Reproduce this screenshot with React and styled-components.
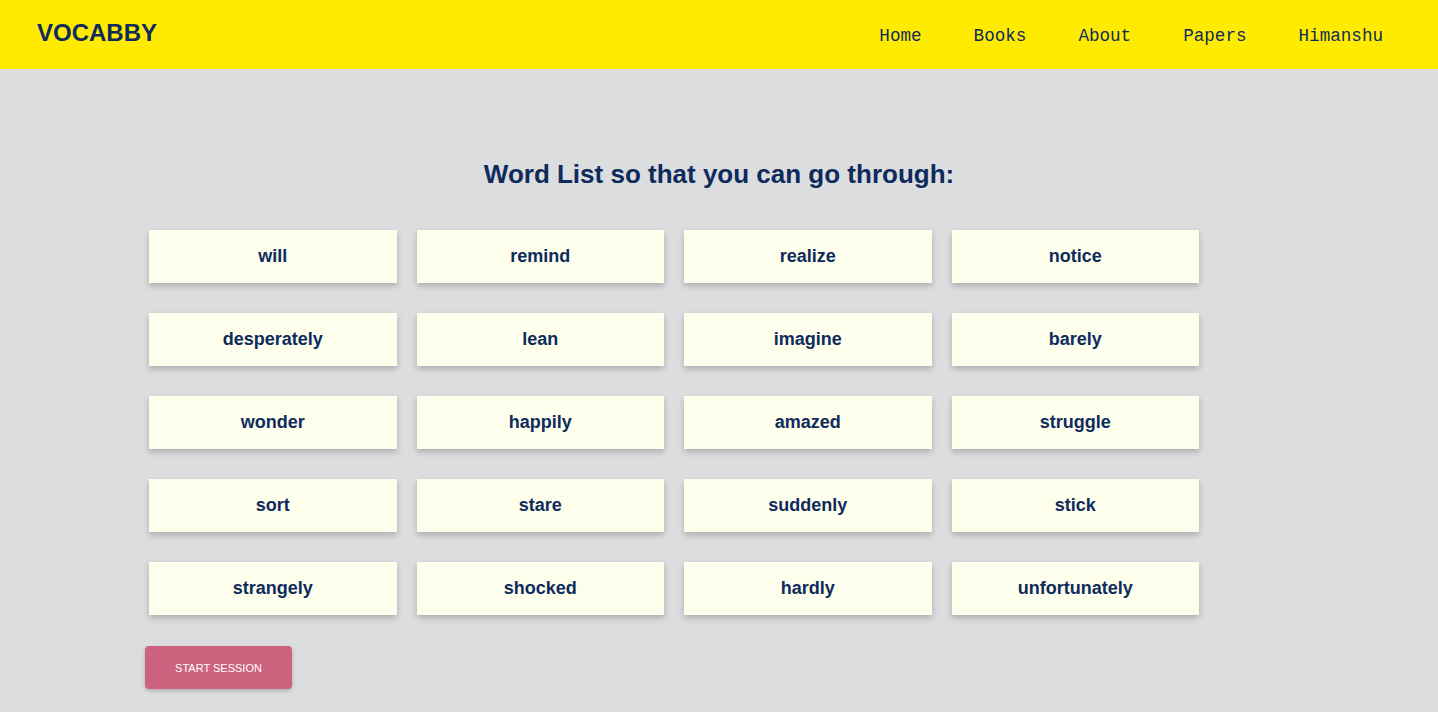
import React from 'react';
import styled, { createGlobalStyle } from 'styled-components';

const GlobalStyle = createGlobalStyle`
body {
  margin: 0;
  background: #dcdddf;
  font-family: "Liberation Sans", Arial, sans-serif;
}
`;

const Header = styled.header`
height: 69px;
background: #ffeb00;
display: flex;
align-items: center;
justify-content: space-between;
padding: 0 29px 0 37px;
`;
const Logo = styled.div`
font-size: 24px;
font-weight: 700;
color: #0e2b5c;
margin-top: -4px;
`;
const Nav = styled.nav`
display: flex;
align-items: center;
margin-top: 2px;
`;
const NavLink = styled.a`
font-family: "Liberation Mono", "Courier New", monospace;
font-size: 17.6px;
color: #0e2b5c;
padding: 0 26px;
text-decoration: none;
cursor: pointer;
`;
const Main = styled.main`
padding: 90px 0 23px 145px;
`;
const Title = styled.h2`
margin: 0 0 40px -145px;
text-align: center;
font-size: 26px;
font-weight: 700;
color: #0e2b5c;
`;
const Grid = styled.div`
display: grid;
grid-template-columns: repeat(4, 247.5px);
column-gap: 20px;
row-gap: 30px;
padding-left: 4px;
`;
const Card = styled.div`
height: 53px;
background: #fdfeec;
box-shadow: 0 3px 6px rgba(0, 0, 0, 0.22);
display: flex;
align-items: center;
justify-content: center;
font-size: 18px;
font-weight: 700;
color: #0e2b5c;
`;
const Button = styled.button`
margin-top: 31px;
width: 147px;
height: 43px;
border: none;
border-radius: 4px;
background: #cd627f;
color: #fff;
font-family: "Liberation Sans", Arial, sans-serif;
font-size: 11px;
text-transform: uppercase;
box-shadow: 0 2px 4px rgba(0, 0, 0, 0.2);
cursor: pointer;
`;

const words = [
  'will', 'remind', 'realize', 'notice',
  'desperately', 'lean', 'imagine', 'barely',
  'wonder', 'happily', 'amazed', 'struggle',
  'sort', 'stare', 'suddenly', 'stick',
  'strangely', 'shocked', 'hardly', 'unfortunately',
];

const App = () => (
  <>
    <GlobalStyle />
    <Header>
      <Logo>VOCABBY</Logo>
      <Nav>
        {['Home', 'Books', 'About', 'Papers', 'Himanshu'].map((n) => (
          <NavLink key={n}>{n}</NavLink>
        ))}
      </Nav>
    </Header>
    <Main>
      <Title>Word List so that you can go through:</Title>
      <Grid>
        {words.map((w) => <Card key={w}>{w}</Card>)}
      </Grid>
      <Button>Start Session</Button>
    </Main>
  </>
);

export default App;
